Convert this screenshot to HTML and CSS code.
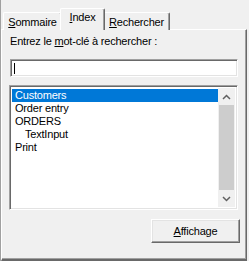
FILE: index.html
```html
<!DOCTYPE html>
<html lang="fr">
<head>
    <meta charset="UTF-8">
    <title>Index</title>
    <link rel="stylesheet" href="styles.css">
</head>
<body>
    <div class="dialog">
        <!-- onglets -->
        <div class="tabs">
            <div class="tab tab-sommaire"><u>S</u>ommaire</div>
            <div class="tab tab-index active"><u>I</u>ndex</div>
            <div class="tab tab-rechercher"><u>R</u>echercher</div>
        </div>

        <!-- contenu de l'onglet Index -->
        <div class="panel">
            <div class="prompt">Entrez le <u>m</u>ot-clé à rechercher :</div>
            <div class="field"><span class="caret"></span></div>

            <div class="listbox">
                <ul class="items">
                    <li class="selected">Customers</li>
                    <li>Order entry</li>
                    <li>ORDERS</li>
                    <li class="sub">TextInput</li>
                    <li>Print</li>
                </ul>
                <div class="scrollbar">
                    <div class="arrow">
                        <svg width="9" height="6" viewBox="0 0 9 6"><path d="M1 5 L4.5 1.5 L8 5" fill="none" stroke="#606060" stroke-width="1.5"/></svg>
                    </div>
                    <div class="thumb"></div>
                    <div class="track"></div>
                    <div class="arrow">
                        <svg width="9" height="6" viewBox="0 0 9 6"><path d="M1 1 L4.5 4.5 L8 1" fill="none" stroke="#606060" stroke-width="1.5"/></svg>
                    </div>
                </div>
            </div>

            <div class="actions">
                <button class="btn"><u>A</u>ffichage</button>
            </div>
        </div>
    </div>
</body>
</html>
```

FILE: styles.css
```css
/* base */
* {
    box-sizing: border-box;
    margin: 0;
    padding: 0;
}

body {
    background: #f0f0f0;
    font-family: "Liberation Sans", Arial, sans-serif;
    font-size: 11px;
    line-height: 13px;
    letter-spacing: -0.2px;
    color: #000;
    overflow: hidden;
}

u {
    text-decoration: underline;
    text-underline-offset: 1px;
}

.dialog {
    width: 249px;
    height: 261px;
    padding-top: 8px;
    border-left: 1px solid #a0a0a0;
}

/* onglets */
.tabs {
    display: flex;
    align-items: flex-end;
    height: 22px;
    padding-left: 2px;
}

.tab {
    height: 18px;
    padding-top: 3px;
    text-align: center;
    background: #f0f0f0;
    border-top: 1px solid #fff;
    border-left: 1px solid #fff;
    border-right: 1px solid #696969;
    box-shadow: inset -1px 0 #a0a0a0;
    border-top-left-radius: 2px;
    border-top-right-radius: 2px;
}

.tab-sommaire {
    width: 59px;
}

.tab-index {
    width: 45px;
}

.tab-rechercher {
    width: 67px;
}

.tab.active {
    height: 22px;
    padding-top: 2px;
    margin: 0 -2px;
    position: relative;
    z-index: 1;
}

/* panneau */
.panel {
    width: 246px;
    height: 232px;
    margin-top: -1px;
    padding: 5px 0 0 8px;
    border-top: 1px solid #fff;
    border-left: 1px solid #fff;
    border-right: 1px solid #696969;
    border-bottom: 2px solid #696969;
    box-shadow: inset -1px -1px #a0a0a0;
}

.prompt {
    height: 13px;
}

.field {
    width: 228px;
    height: 18px;
    margin-top: 11px;
    background: #fff;
    border: 1px solid;
    border-color: #a0a0a0 #fff #fff #a0a0a0;
    box-shadow: inset 1px 1px #696969, inset -1px -1px #e3e3e3;
    padding: 3px 0 0 3px;
}

.caret {
    display: block;
    width: 1px;
    height: 11px;
    background: #000;
}

/* liste */
.listbox {
    display: flex;
    width: 229px;
    height: 125px;
    margin: 8px 0 0 -1px;
    background: #fff;
    border: 1px solid;
    border-color: #a0a0a0 #fff #fff #a0a0a0;
    box-shadow: inset 1px 1px #696969, inset -1px -1px #e3e3e3;
    padding: 2px;
}

.items {
    flex: 1;
    list-style: none;
    padding-top: 1px;
}

.items li {
    height: 13px;
    padding-left: 3px;
}

.items li.sub {
    padding-left: 13px;
}

.items li.selected {
    background: #0078d7;
    color: #fff;
}

.scrollbar {
    width: 17px;
    display: flex;
    flex-direction: column;
    background: #f0f0f0;
}

.arrow {
    height: 17px;
    display: flex;
    align-items: center;
    justify-content: center;
}

.thumb {
    height: 85px;
    margin: 0 1px;
    background: #cdcdcd;
}

.track {
    flex: 1;
}

/* bouton */
.actions {
    display: flex;
    justify-content: flex-end;
    padding-right: 6px;
    margin-top: 9px;
}

.btn {
    width: 89px;
    height: 24px;
    font: inherit;
    letter-spacing: -0.2px;
    background: #f0f0f0;
    color: #000;
    border: 1px solid;
    border-color: #fff #696969 #696969 #fff;
    box-shadow: inset -1px -1px #a0a0a0, inset 1px 1px #e3e3e3;
}
```
